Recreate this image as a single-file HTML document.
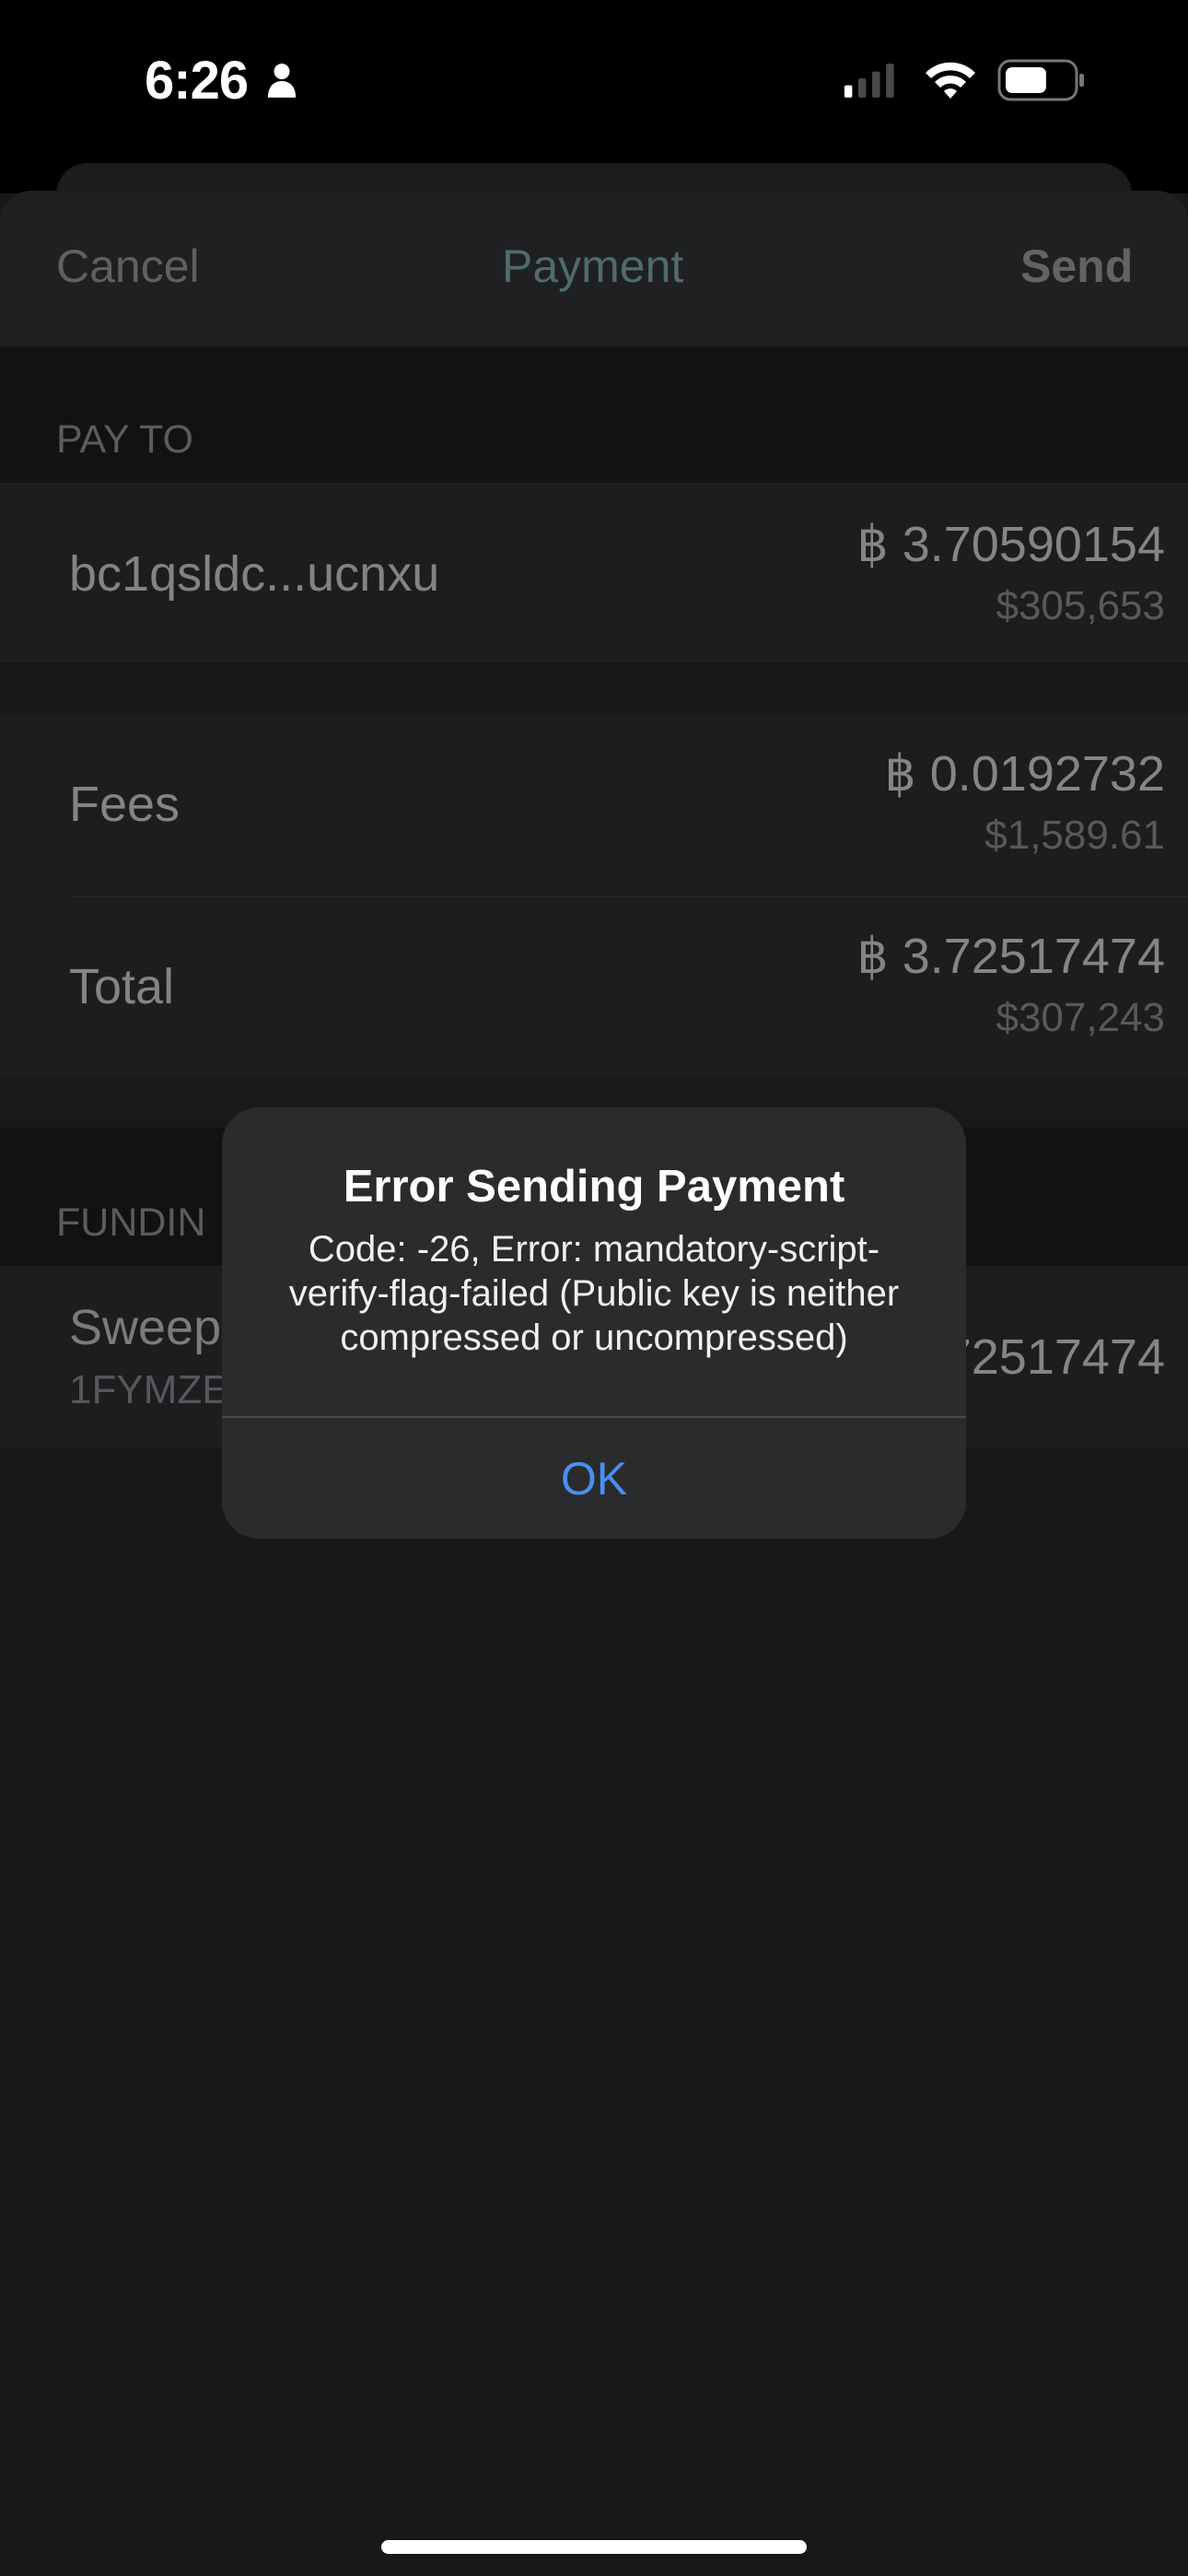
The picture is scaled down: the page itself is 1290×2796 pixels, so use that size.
<!DOCTYPE html>
<html><head><meta charset="utf-8"><style>
*{margin:0;padding:0;box-sizing:border-box}
body{width:1290px;height:2796px;background:#17181a;position:relative;overflow:hidden;font-family:"Liberation Sans",sans-serif}
.abs{position:absolute}
.t{position:absolute;white-space:nowrap}
</style></head><body>
<div class="abs" style="left:0;top:0;width:1290px;height:210px;background:#000"></div>
<div class="t" style="left:157px;top:54px;font-size:58px;font-weight:bold;color:#fff;letter-spacing:-1px">6:26</div>
<svg class="abs" style="left:289px;top:68px" width="34" height="38" viewBox="0 0 36 40"><circle cx="18" cy="10" r="9" fill="#fff"/><path d="M2 40 C2 26 10 21 18 21 C26 21 34 26 34 40Z" fill="#fff"/></svg>
<svg class="abs" style="left:915px;top:68px" width="66" height="38" viewBox="0 0 70 40"><rect x="2" y="26" width="9" height="14" rx="2" fill="#fff"/><rect x="18" y="18" width="9" height="22" rx="2" fill="#4a4a4a"/><rect x="34" y="10" width="9" height="30" rx="2" fill="#4a4a4a"/><rect x="50" y="1" width="9" height="39" rx="2" fill="#4a4a4a"/></svg>
<svg class="abs" style="left:1003px;top:64px" width="58" height="46" viewBox="0 0 58 46"><path d="M2 15 A38 38 0 0 1 56 15 L50 21 A30 30 0 0 0 8 21Z" fill="#fff"/><path d="M12 25 A24 24 0 0 1 46 25 L40 31 A16 16 0 0 0 18 31Z" fill="#fff"/><path d="M22 35 A10 10 0 0 1 36 35 L29 43Z" fill="#fff"/></svg>
<svg class="abs" style="left:1083px;top:64px" width="96" height="46" viewBox="0 0 96 46"><rect x="2" y="2" width="84" height="42" rx="12" fill="none" stroke="#777" stroke-width="3"/><rect x="9" y="9" width="44" height="28" rx="7" fill="#fff"/><rect x="89" y="16" width="5" height="14" rx="2" fill="#777"/></svg>

<div class="abs" style="left:61px;top:177px;width:1168px;height:100px;background:#1b1c1e;border-radius:34px 34px 0 0"></div>
<div class="abs" style="left:0;top:207px;width:1290px;height:169px;background:#1f2022;border-radius:34px 34px 0 0"></div>
<div class="t" style="left:61px;top:260px;font-size:50px;color:#5f6062">Cancel</div>
<div class="t" style="left:545px;top:260px;font-size:50px;color:#4f6b6b">Payment</div>
<div class="t" style="left:1108px;top:260px;font-size:50px;font-weight:bold;color:#626365">Send</div>
<div class="abs" style="left:0;top:376px;width:1290px;height:148px;background:#111214"></div>
<div class="t" style="left:61px;top:453px;font-size:43px;color:#5b5c5e">PAY TO</div>
<div class="abs" style="left:0;top:524px;width:1290px;height:195px;background:#1c1d1f"></div>
<div class="t" style="left:75px;top:592px;font-size:54px;color:#828385">bc1qsldc...ucnxu</div>
<div class="t" style="right:25px;top:559px;font-size:54px;color:#848587">฿ 3.70590154</div>
<div class="t" style="right:25px;top:633px;font-size:44px;color:#58595b">$305,653</div>
<div class="abs" style="left:0;top:719px;width:1290px;height:55px;background:#161719"></div>
<div class="abs" style="left:0;top:774px;width:1290px;height:396px;background:#1c1d1f"></div>
<div class="abs" style="left:75px;top:972px;width:1215px;height:2px;background:#252628"></div>
<div class="t" style="left:75px;top:842px;font-size:54px;color:#838486">Fees</div>
<div class="t" style="right:25px;top:808px;font-size:54px;color:#848587">฿ 0.0192732</div>
<div class="t" style="right:25px;top:882px;font-size:44px;color:#58595b">$1,589.61</div>
<div class="t" style="left:75px;top:1040px;font-size:54px;color:#838486">Total</div>
<div class="t" style="right:25px;top:1006px;font-size:54px;color:#848587">฿ 3.72517474</div>
<div class="t" style="right:25px;top:1080px;font-size:44px;color:#58595b">$307,243</div>
<div class="abs" style="left:0;top:1170px;width:1290px;height:54px;background:#19191b"></div>
<div class="abs" style="left:0;top:1224px;width:1290px;height:150px;background:#111214"></div>
<div class="t" style="left:61px;top:1303px;font-size:43px;color:#5b5c5e">FUNDIN</div>
<div class="abs" style="left:0;top:1374px;width:1290px;height:198px;background:#1c1d1f"></div>
<div class="t" style="left:75px;top:1410px;font-size:54px;color:#7a7b7d">Sweep</div>
<div class="t" style="left:75px;top:1484px;font-size:44px;color:#56575a">1FYMZE</div>
<div class="t" style="right:25px;top:1441px;font-size:54px;color:#848587">฿ 3.72517474</div>

<div class="abs" style="left:241px;top:1202px;width:808px;height:468px;background:#2a2b2c;border-radius:40px;overflow:hidden">
<div class="t" style="left:0;width:808px;text-align:center;top:58px;font-size:49px;font-weight:bold;color:#fff">Error Sending Payment</div>
<div class="abs" style="left:0;width:808px;text-align:center;top:130px;font-size:40px;line-height:48px;color:#f0f0f0;white-space:nowrap">Code: -26, Error: mandatory-script-<br>verify-flag-failed (Public key is neither<br>compressed or uncompressed)</div>
<div class="abs" style="left:0;top:335px;width:808px;height:2px;background:#48494b"></div>
<div class="t" style="left:0;width:808px;text-align:center;top:374px;font-size:50px;color:#4a8ff0">OK</div>
</div>
<div class="abs" style="left:414px;top:2757px;width:462px;height:15px;background:#fff;border-radius:8px"></div>
</body></html>
